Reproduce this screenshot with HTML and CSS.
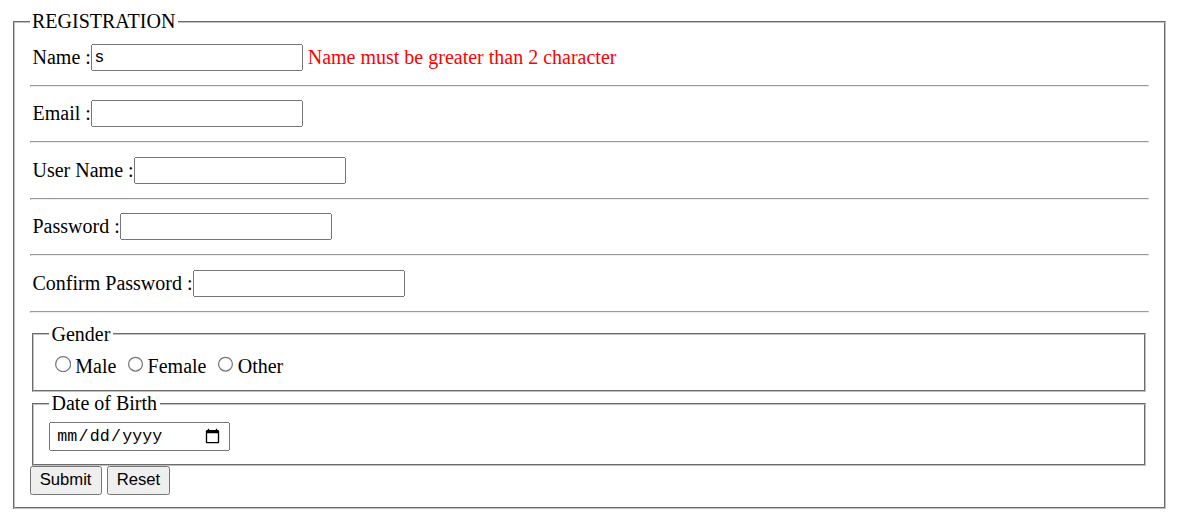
FILE: index.html
```html
<!DOCTYPE html>
<html>
<head>
<meta charset="utf-8">
<title>Registration</title>
<link rel="stylesheet" href="styles.css">
</head>
<body class="page">
<fieldset class="outer">
<legend>REGISTRATION</legend>
<form>
<div class="row"><label class="label">Name :</label><input type="text" class="field" value="s"><span class="error">Name must be greater than 2 character</span></div>
<hr class="sep">
<div class="row"><label class="label">Email :</label><input type="text" class="field"></div>
<hr class="sep">
<div class="row"><label class="label">User Name :</label><input type="text" class="field"></div>
<hr class="sep">
<div class="row"><label class="label">Password :</label><input type="password" class="field"></div>
<hr class="sep">
<div class="row"><label class="label">Confirm Password :</label><input type="password" class="field"></div>
<hr class="sep">
<fieldset class="inner">
<legend>Gender</legend>
<input type="radio" name="g" class="radio">Male <input type="radio" name="g" class="radio">Female <input type="radio" name="g" class="radio">Other
</fieldset>
<fieldset class="inner">
<legend>Date of Birth</legend>
<input type="date" class="date">
</fieldset>
<button type="button" class="btn">Submit</button> <button type="reset" class="btn">Reset</button>
</form>
</fieldset>
</body>
</html>
```
FILE: styles.css
```css
html { zoom: 1.25; }
.page {
  margin: 8px;
  font-family: "Liberation Serif", "Times New Roman", serif;
  font-size: 16px;
  color: #000;
}
.outer, .inner {
  margin: 0 2px;
  border: 2px groove rgb(192, 192, 192);
}
.row {
  display: flex;
  align-items: center;
  padding: 3px 0;
}
.label { padding-left: 2.4px; }
.field {
  box-sizing: border-box;
  width: 170px;
  height: 21.6px;
  font-family: "Liberation Sans", Arial, sans-serif;
  font-size: 13.333px;
}
.error { color: red; margin-left: 3.5px; }
.date {
  box-sizing: border-box;
  width: 145px;
  height: 23.2px;
  padding: 1px 4px;
  font-family: "Liberation Mono", monospace;
  font-size: 13.333px;
}
.btn {
  font-family: "Liberation Sans", Arial, sans-serif;
  font-size: 13.333px;
  padding: 2px 6.5px;
}
```
